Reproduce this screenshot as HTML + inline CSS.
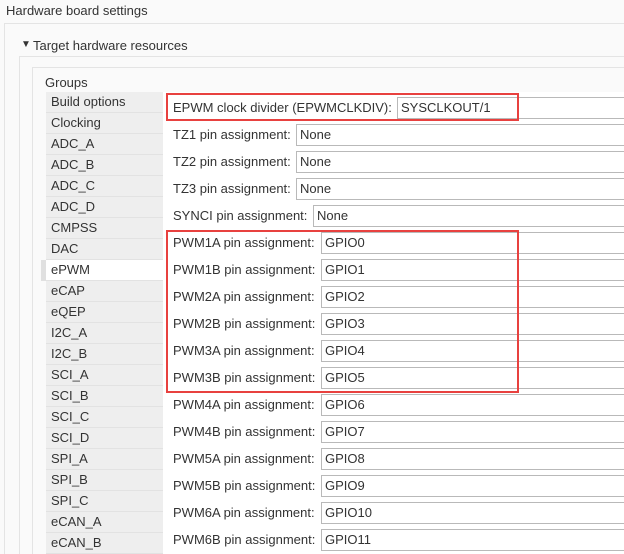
<!DOCTYPE html><html><head><style>
html,body{margin:0;width:624px;height:554px;overflow:hidden}
body{background:#fafafa;font-family:"Liberation Sans",sans-serif;font-size:13px;color:#333;position:relative}
.a{position:absolute}
.li{position:absolute;left:46px;width:117px;background:#eeeeee;border-bottom:1px solid #e2e2e2;line-height:20px;padding-left:5px;box-sizing:border-box;height:21px}
.lb{position:absolute;left:173px;line-height:22px;white-space:nowrap}
.in{position:absolute;width:303px;height:22px;border:1px solid #b9b9b9;border-right:none;background:#fff;line-height:20px;padding-left:3px;box-sizing:border-box;overflow:hidden}
.red{position:absolute;border:2px solid #e8413f;left:166px;width:349px}
</style></head><body>
<div class="a" style="left:6px;top:3px">Hardware board settings</div>
<div class="a" style="left:4px;top:23px;width:620px;height:531px;border-left:1px solid #e4e4e4;border-top:1px solid #e4e4e4;box-sizing:border-box"></div>
<div class="a" style="left:21px;top:39px;font-size:10px">▼</div>
<div class="a" style="left:33px;top:38px">Target hardware resources</div>
<div class="a" style="left:19px;top:56px;width:605px;height:498px;border-left:1px solid #e4e4e4;border-top:1px solid #e4e4e4;box-sizing:border-box"></div>
<div class="a" style="left:32px;top:67px;width:592px;height:487px;border-left:1px solid #e4e4e4;border-top:1px solid #e4e4e4;box-sizing:border-box"></div>
<div class="a" style="left:45px;top:75px">Groups</div>
<div class="a" style="left:163px;top:92px;width:461px;height:462px;background:#fff"></div>
<div class="li" style="top:92px">Build options</div>
<div class="li" style="top:113px">Clocking</div>
<div class="li" style="top:134px">ADC_A</div>
<div class="li" style="top:155px">ADC_B</div>
<div class="li" style="top:176px">ADC_C</div>
<div class="li" style="top:197px">ADC_D</div>
<div class="li" style="top:218px">CMPSS</div>
<div class="li" style="top:239px">DAC</div>
<div class="li" style="top:260px;background:#fff">ePWM</div>
<div class="a" style="left:41px;top:260px;width:5px;height:21px;background:#e0e0e0"></div>
<div class="li" style="top:281px">eCAP</div>
<div class="li" style="top:302px">eQEP</div>
<div class="li" style="top:323px">I2C_A</div>
<div class="li" style="top:344px">I2C_B</div>
<div class="li" style="top:365px">SCI_A</div>
<div class="li" style="top:386px">SCI_B</div>
<div class="li" style="top:407px">SCI_C</div>
<div class="li" style="top:428px">SCI_D</div>
<div class="li" style="top:449px">SPI_A</div>
<div class="li" style="top:470px">SPI_B</div>
<div class="li" style="top:491px">SPI_C</div>
<div class="li" style="top:512px">eCAN_A</div>
<div class="li" style="top:533px">eCAN_B</div>

<div class="lb" style="top:97px">EPWM clock divider (EPWMCLKDIV):</div><div class="in" style="left:397px;top:97px;width:227px">SYSCLKOUT/1</div>
<div class="lb" style="top:124px">TZ1 pin assignment:</div><div class="in" style="left:296px;top:124px;width:328px">None</div>
<div class="lb" style="top:151px">TZ2 pin assignment:</div><div class="in" style="left:296px;top:151px;width:328px">None</div>
<div class="lb" style="top:178px">TZ3 pin assignment:</div><div class="in" style="left:296px;top:178px;width:328px">None</div>
<div class="lb" style="top:205px">SYNCI pin assignment:</div><div class="in" style="left:313px;top:205px;width:311px">None</div>
<div class="lb" style="top:232px">PWM1A pin assignment:</div><div class="in" style="left:321px;top:232px">GPIO0</div>
<div class="lb" style="top:259px">PWM1B pin assignment:</div><div class="in" style="left:321px;top:259px">GPIO1</div>
<div class="lb" style="top:286px">PWM2A pin assignment:</div><div class="in" style="left:321px;top:286px">GPIO2</div>
<div class="lb" style="top:313px">PWM2B pin assignment:</div><div class="in" style="left:321px;top:313px">GPIO3</div>
<div class="lb" style="top:340px">PWM3A pin assignment:</div><div class="in" style="left:321px;top:340px">GPIO4</div>
<div class="lb" style="top:367px">PWM3B pin assignment:</div><div class="in" style="left:321px;top:367px">GPIO5</div>
<div class="lb" style="top:394px">PWM4A pin assignment:</div><div class="in" style="left:321px;top:394px">GPIO6</div>
<div class="lb" style="top:421px">PWM4B pin assignment:</div><div class="in" style="left:321px;top:421px">GPIO7</div>
<div class="lb" style="top:448px">PWM5A pin assignment:</div><div class="in" style="left:321px;top:448px">GPIO8</div>
<div class="lb" style="top:475px">PWM5B pin assignment:</div><div class="in" style="left:321px;top:475px">GPIO9</div>
<div class="lb" style="top:502px">PWM6A pin assignment:</div><div class="in" style="left:321px;top:502px">GPIO10</div>
<div class="lb" style="top:529px">PWM6B pin assignment:</div><div class="in" style="left:321px;top:529px">GPIO11</div>
<div class="red" style="top:93px;height:24px"></div>
<div class="red" style="top:230px;height:159px"></div>
</body></html>
